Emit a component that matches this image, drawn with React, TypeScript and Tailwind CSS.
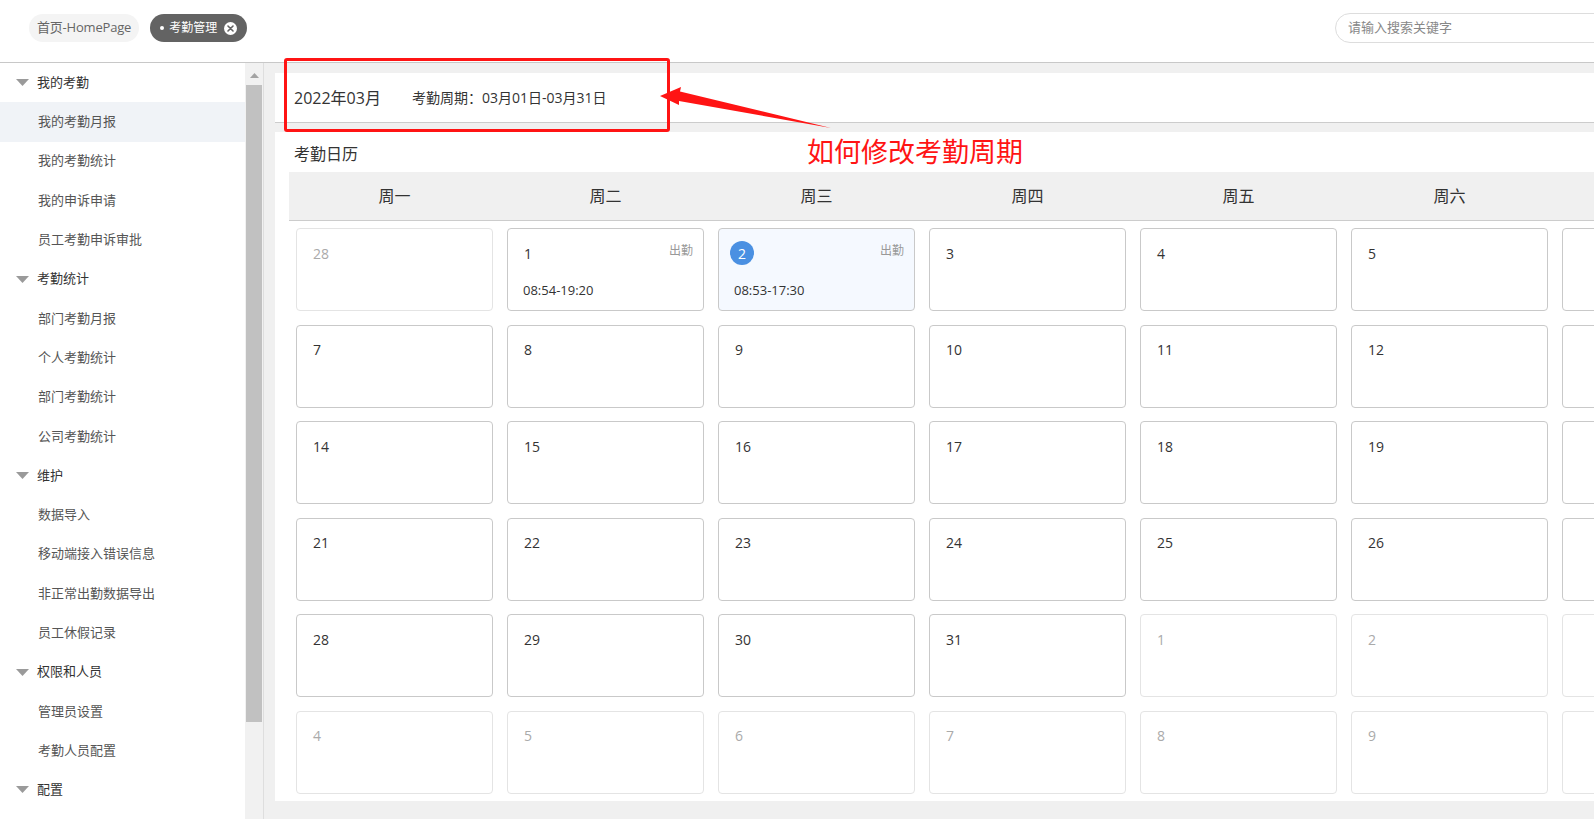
import React from "react";

const FONT = { fontFamily: '"Open Sans", "Noto Sans CJK SC", sans-serif' };

type Cell = { d: number | null; out?: boolean; att?: string; time?: string; today?: boolean };

const rows: Cell[][] = [
  [{ d: 28, out: true }, { d: 1, att: "出勤", time: "08:54-19:20" }, { d: 2, att: "出勤", time: "08:53-17:30", today: true }, { d: 3 }, { d: 4 }, { d: 5 }, { d: null }],
  [7, 8, 9, 10, 11, 12].map((d) => ({ d } as Cell)).concat([{ d: null }]),
  [14, 15, 16, 17, 18, 19].map((d) => ({ d } as Cell)).concat([{ d: null }]),
  [21, 22, 23, 24, 25, 26].map((d) => ({ d } as Cell)).concat([{ d: null }]),
  [{ d: 28 }, { d: 29 }, { d: 30 }, { d: 31 }, { d: 1, out: true }, { d: 2, out: true }, { d: null, out: true }],
  [4, 5, 6, 7, 8, 9].map((d) => ({ d, out: true } as Cell)).concat([{ d: null, out: true }]),
];

const weeks = ["周一", "周二", "周三", "周四", "周五", "周六", ""];

type MenuItem = { label: string; group?: boolean; active?: boolean };
const menu: MenuItem[] = [
  { label: "我的考勤", group: true },
  { label: "我的考勤月报", active: true },
  { label: "我的考勤统计" },
  { label: "我的申诉申请" },
  { label: "员工考勤申诉审批" },
  { label: "考勤统计", group: true },
  { label: "部门考勤月报" },
  { label: "个人考勤统计" },
  { label: "部门考勤统计" },
  { label: "公司考勤统计" },
  { label: "维护", group: true },
  { label: "数据导入" },
  { label: "移动端接入错误信息" },
  { label: "非正常出勤数据导出" },
  { label: "员工休假记录" },
  { label: "权限和人员", group: true },
  { label: "管理员设置" },
  { label: "考勤人员配置" },
  { label: "配置", group: true },
];

function DayCell({ c }: { c: Cell }) {
  return (
    <div
      className={`relative mx-[7px] h-[83px] rounded-[4px] border ${
        c.out ? "border-[#e4e4e4]" : "border-[#c9c9c9]"
      } ${c.today ? "bg-[#f5f9ff]" : "bg-white"}`}
    >
      {c.d !== null && (
        <div className="absolute left-[16px] top-[12px] flex h-[24px] items-center">
          {c.today ? (
            <span className="-ml-[5px] flex h-[24px] w-[24px] items-center justify-center rounded-full bg-[#4a90e2] text-[14px] text-white">
              {c.d}
            </span>
          ) : (
            <span className={`text-[14px] ${c.out ? "text-[#aaaaaa]" : "text-[#333333]"}`}>{c.d}</span>
          )}
        </div>
      )}
      {c.att && (
        <div className="absolute right-[10px] top-[13px] text-[12px] leading-[18px] text-[#999999]">{c.att}</div>
      )}
      {c.time && (
        <div className="absolute left-[15px] top-[51px] text-[13px] leading-[20px] text-[#333333]">{c.time}</div>
      )}
    </div>
  );
}

export default function App() {
  return (
    <div className="relative flex h-[819px] w-[1594px] flex-col overflow-hidden bg-white" style={FONT}>
      {/* header */}
      <div className="flex h-[63px] shrink-0 items-start border-b border-[#c8c8c8] bg-white">
        <div className="ml-[29px] mt-[14px] flex h-[28px] items-center rounded-full bg-[#f4f4f4] px-[8px] text-[13px] tracking-[-0.2px] text-[#666666]">
          首页-HomePage
        </div>
        <div className="ml-[11px] mt-[14px] flex h-[28px] items-center rounded-full bg-[#636363] pl-[10px] pr-[10px] text-[12px] text-white">
          <span className="mr-[5px] h-[4px] w-[4px] rounded-full bg-white" />
          <span>考勤管理</span>
          <span className="ml-[7px] flex h-[13px] w-[13px] items-center justify-center rounded-full bg-white">
            <svg width="7" height="7" viewBox="0 0 7 7">
              <path d="M1 1L6 6M6 1L1 6" stroke="#636363" strokeWidth="1.6" strokeLinecap="round" />
            </svg>
          </span>
        </div>
        <div className="ml-auto mt-[13px] flex h-[30px] w-[300px] -mr-[41px] items-center rounded-full border border-[#dddddd] pl-[12px] text-[13px] text-[#888888]">
          请输入搜索关键字
        </div>
      </div>

      {/* body */}
      <div className="flex min-h-0 flex-1">
        {/* sidebar */}
        <div className="w-[245px] shrink-0 overflow-hidden bg-white">
          {menu.map((m, i) => (
            <div
              key={i}
              className={`flex h-[39.3px] items-center text-[13px] ${m.active ? "bg-[#f0f3f7] text-[#4a90e2]" : ""} ${
                m.group ? "pl-[16px] text-[#333333]" : "pl-[38px] text-[#555555]"
              }`}
            >
              {m.group && (
                <svg width="13" height="7" viewBox="0 0 13 7" className="mr-[8px]">
                  <polygon points="0,0 13,0 6.5,7" fill="#9a9a9a" />
                </svg>
              )}
              {m.label}
            </div>
          ))}
        </div>
        {/* scrollbar */}
        <div className="flex w-[18px] shrink-0 flex-col items-center bg-[#f1f1f1]">
          <svg width="9" height="5" viewBox="0 0 9 5" className="mt-[10px]">
            <polygon points="0,5 9,5 4.5,0" fill="#a3a3a3" />
          </svg>
          <div className="mt-[7px] h-[637px] w-[16px] bg-[#c1c1c1]" />
        </div>
        {/* main */}
        <div className="min-w-0 flex-1 overflow-hidden border-l border-[#dedede] bg-[#f0f0f0] pl-[11px] pt-[10px]">
          <div className="flex h-[50px] w-[1500px] items-center border-b border-[#cccccc] bg-white pl-[19px] text-[#333333]">
            <span className="text-[16px]">2022年03月</span>
            <span className="ml-[31px] text-[14px]">考勤周期：03月01日-03月31日</span>
          </div>
          <div className="mt-[9px] w-[1520px] bg-white px-[14px] pb-[7px] pt-[12px]">
            <div className="mb-[8px] h-[20px] pl-[5px] text-[16px] leading-[20px] text-[#333333]">考勤日历</div>
            <div className="grid h-[49px] grid-cols-[repeat(7,211px)] items-center border-b border-[#cccccc] bg-[#f0f0f0]">
              {weeks.map((w, i) => (
                <div key={i} className="text-center text-[16px] text-[#333333]">
                  {w}
                </div>
              ))}
            </div>
            <div className="mt-[7px] grid grid-cols-[repeat(7,211px)] gap-y-[13.5px]">
              {rows.flat().map((c, i) => (
                <DayCell key={i} c={c} />
              ))}
            </div>
          </div>
        </div>
      </div>

      {/* annotation overlay */}
      <div className="pointer-events-none absolute left-[284px] top-[58px] h-[74px] w-[386px] rounded-[3px] border-[3px] border-[#ff1414]" />
      <svg className="pointer-events-none absolute left-0 top-0" width="1594" height="819" viewBox="0 0 1594 819">
        <polygon points="660,96 681,87 680,91.5 831,128 679,101 679,105" fill="#ff1414" />
      </svg>
      <div className="pointer-events-none absolute left-[807px] top-[134px] text-[27px] leading-[36px] text-[#ff1414]">
        如何修改考勤周期
      </div>
    </div>
  );
}
